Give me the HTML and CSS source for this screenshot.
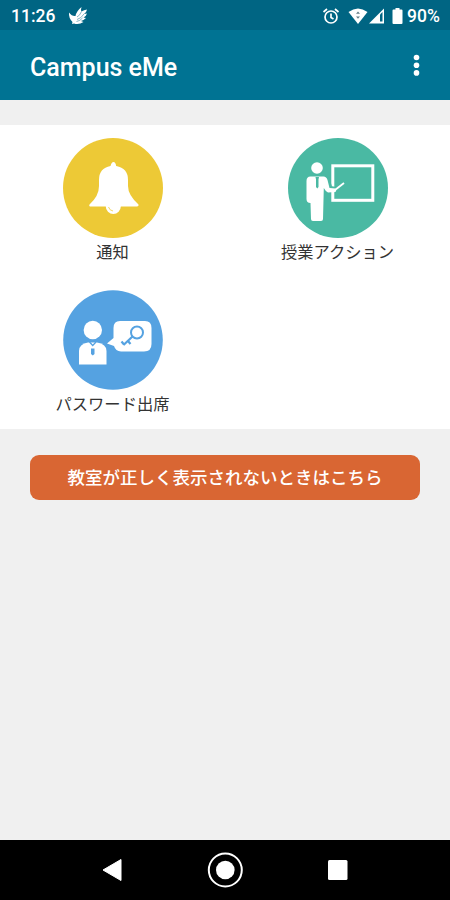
FILE: index.html
```html
<!DOCTYPE html>
<html lang="ja">
<head>
<meta charset="utf-8">
<meta name="viewport" content="width=device-width">
<title>Campus eMe</title>
<link rel="stylesheet" href="styles.css">
</head>
<body>
<div class="status">
  <span class="time">11:26</span>
  <svg class="bird" width="20" height="20" viewBox="0 0 20 20"><path d="M1 6.500Q4 10.500 7.500 10Q8.500 5 13.500 1Q12.500 4 13.500 5.500Q16 4 19 3.500Q18.500 6.500 16 8L19 7.500Q18 10.500 15.500 11.500L18 12Q15.500 14.500 13 15L15.500 16Q11 19 6 17.500L4 18L4.500 16Q.5 12 1 6.500Z" fill="#fff"/><path d="M9 11Q12 9.500 13.500 5.500M9 13.500Q13 12.500 16 8M8.500 15.500Q12 15 14.500 12" fill="none" stroke="#5596aa" stroke-width=".7"/></svg>
  <div class="indicators">
    <svg width="18" height="18" viewBox="0 0 18 18" fill="none" stroke="#fff" stroke-width="1.700"><circle cx="9" cy="10" r="6"/><path d="M1.500 5L5 2M16.500 5L13 2M9 6.500V10.500L11.500 12"/></svg>
    <svg class="wifi" width="20" height="18" viewBox="0 0 20 18"><path d="M.5 5Q10-2 19.500 5L10 17Z" fill="#fff"/><path d="M8 6.800L10 4.500L12 6.800ZM8 9.500L10 11.800L12 9.500Z" fill="#667f88"/></svg>
    <svg class="signal" width="17" height="18" viewBox="0 0 17 18"><path d="M1 16.500L16 1.500V16.500Z" fill="#fff"/><path d="M12 7.500L14.500 5V14.500H12Z" fill="#006583"/></svg>
    <svg class="battery" width="11" height="18" viewBox="0 0 11 18"><path d="M1.500 2.500H3.500V1H7.500V2.500H9.500Q10.500 2.500 10.500 3.500V16Q10.500 17 9.500 17H1.500Q.5 17 .5 16V3.500Q.5 2.500 1.500 2.500Z" fill="#fff"/></svg>
    <span class="percent">90%</span>
  </div>
</div>
<header class="appbar">
  <h1>Campus eMe</h1>
  <svg width="8" height="24" viewBox="0 0 8 24" fill="#fff"><circle cx="4.500" cy="4.500" r="2.800"/><circle cx="4.500" cy="12.200" r="2.800"/><circle cx="4.500" cy="19.900" r="2.800"/></svg>
</header>
<main>
  <section class="menu">
    <a class="item">
      <svg width="100" height="100" viewBox="0 0 100 100"><circle cx="50" cy="50" r="50" fill="#edc936"/><path d="M50.500 24Q52.500 24 53.200 28Q65 30 65 42V48Q65 57 75.500 66.500Q76 68.500 74 68.500H28Q25.500 68.500 26.500 66.500Q36 58 36 48V42Q36 30 47.500 28Q48.500 24 50.500 24Z" fill="#fff"/><circle cx="50.300" cy="68.500" r="7.500" fill="#fff"/><path d="M45.500 69Q46.500 72.500 50 73" fill="none" stroke="#f3d868" stroke-width="1"/></svg>
      <span>通知</span>
    </a>
    <a class="item">
      <svg width="100" height="100" viewBox="0 0 100 100"><circle cx="50" cy="50" r="50" fill="#4ab9a3"/><rect x="44.800" y="27.800" width="40" height="34.500" fill="none" stroke="#fff" stroke-width="3"/><path d="M36 39Q39 39 40 44L42 50.500L49 51.500" fill="none" stroke="#4ab9a3" stroke-width="5"/><circle cx="29" cy="30" r="5.800" fill="#fff"/><path d="M22.500 38.500H35.500Q38.500 38.500 39.500 42L41.500 50L47.500 50.500Q49 52 47.500 54L40 54.500Q38 54 35.800 50L35 81Q35 83 33 83H25Q23 83 23 81L22.500 65Q18.500 65 18.500 61V43Q18.500 38.500 22.500 38.500Z" fill="#fff"/><path d="M47 52L56 45" stroke="#fff" stroke-width="1.800"/><path d="M27.500 39H31L30.500 41.500V49L29.300 50.500L28 49V41.500Z" fill="#4ab9a3"/></svg>
      <span>授業アクション</span>
    </a>
    <a class="item">
      <svg width="100" height="100" viewBox="0 0 100 100"><circle cx="50" cy="50" r="49.800" fill="#55a2e1"/><circle cx="29.800" cy="40" r="9.200" fill="#fff"/><path d="M16 74.500V61Q16 54 25 52.500H34Q43.500 54 43.500 61V74.500Z" fill="#fff"/><path d="M26.500 52L29.700 55.500L33 52" fill="none" stroke="#55a2e1" stroke-width="1.300"/><path d="M28 58.500H31.500V64L29.800 65.500L28 64Z" fill="#55a2e1"/><path d="M57 31H82Q88.500 31 88.500 38V54Q88.500 61.500 81 61.500H58Q52.500 61 51 56L44 53.500L50.500 48V38Q50.500 31 57 31Z" fill="#fff"/><g fill="none" stroke="#55a2e1" stroke-width="2"><circle cx="74" cy="42.500" r="6"/><path d="M69.500 46.500L60.500 55M61 54.500L58.500 51.500M65 51L67.500 54" stroke-width="2.200"/></g></svg>
      <span>パスワード出席</span>
    </a>
  </section>
  <button class="help" type="button">教室が正しく表示されないときはこちら</button>
</main>
<nav class="nav">
  <svg width="22" height="24" viewBox="0 0 22 24"><path d="M2 12L20 1.500V22.500Z" fill="#fff" stroke="#fff" stroke-linejoin="round"/></svg>
  <svg width="36" height="36" viewBox="0 0 36 36"><circle cx="18.300" cy="18" r="16.500" fill="none" stroke="#fff" stroke-width="2"/><circle cx="18.300" cy="18" r="9.300" fill="#fff"/></svg>
  <svg width="22" height="24" viewBox="0 0 22 24"><rect x="1" y="2" width="19.500" height="20" rx="1.500" fill="#fff"/></svg>
</nav>
</body>
</html>
```
FILE: styles.css
```css
* { box-sizing: border-box; }
body {
  margin: 0;
  height: 900px;
  display: flex;
  flex-direction: column;
  background: #f0f0f0;
  font-family: Roboto, "Noto Sans CJK JP", sans-serif;
  overflow: hidden;
}
svg { display: block; flex: none; }
.status {
  height: 30px;
  padding: 2px 10px 0 11px;
  display: flex;
  align-items: center;
  background: #006583;
  color: #fff;
  font-size: 17.5px;
  font-weight: 500;
}
.time { width: 45px; white-space: nowrap; }
.bird { margin-left: 12px; }
.indicators { margin-left: auto; display: flex; align-items: center; }
.wifi { margin-left: 8px; }
.battery { margin-left: 7px; }
.indicators svg { margin-top: -1px; }
.percent { width: 33px; margin-left: 4px; font-size: 17.5px; white-space: nowrap; }
.appbar {
  height: 70px;
  padding: 0 30px;
  display: flex;
  align-items: center;
  justify-content: space-between;
  background: #007393;
  color: #fff;
}
.appbar h1 { margin: 5px 0 0; font-size: 25px; line-height: 30px; font-weight: 500; }
main { flex: 1; padding-top: 25px; }
.menu {
  height: 304px;
  padding-top: 13px;
  display: grid;
  grid-template-columns: 1fr 1fr;
  grid-auto-rows: 152px;
  background: #fff;
}
.item {
  display: flex;
  flex-direction: column;
  align-items: center;
  color: #333;
  font-size: 16.3px;
  line-height: 30px;
}
.help {
  display: block;
  width: 390px;
  height: 45px;
  margin: 26px auto 0;
  padding: 0 0 2px;
  border: 0;
  border-radius: 9px;
  background: #d96633;
  color: #fff;
  font: 500 17.5px "Noto Sans CJK JP", sans-serif;
}
.nav {
  height: 60px;
  padding: 0 101px;
  display: flex;
  align-items: center;
  justify-content: space-between;
  background: #000;
}
```
